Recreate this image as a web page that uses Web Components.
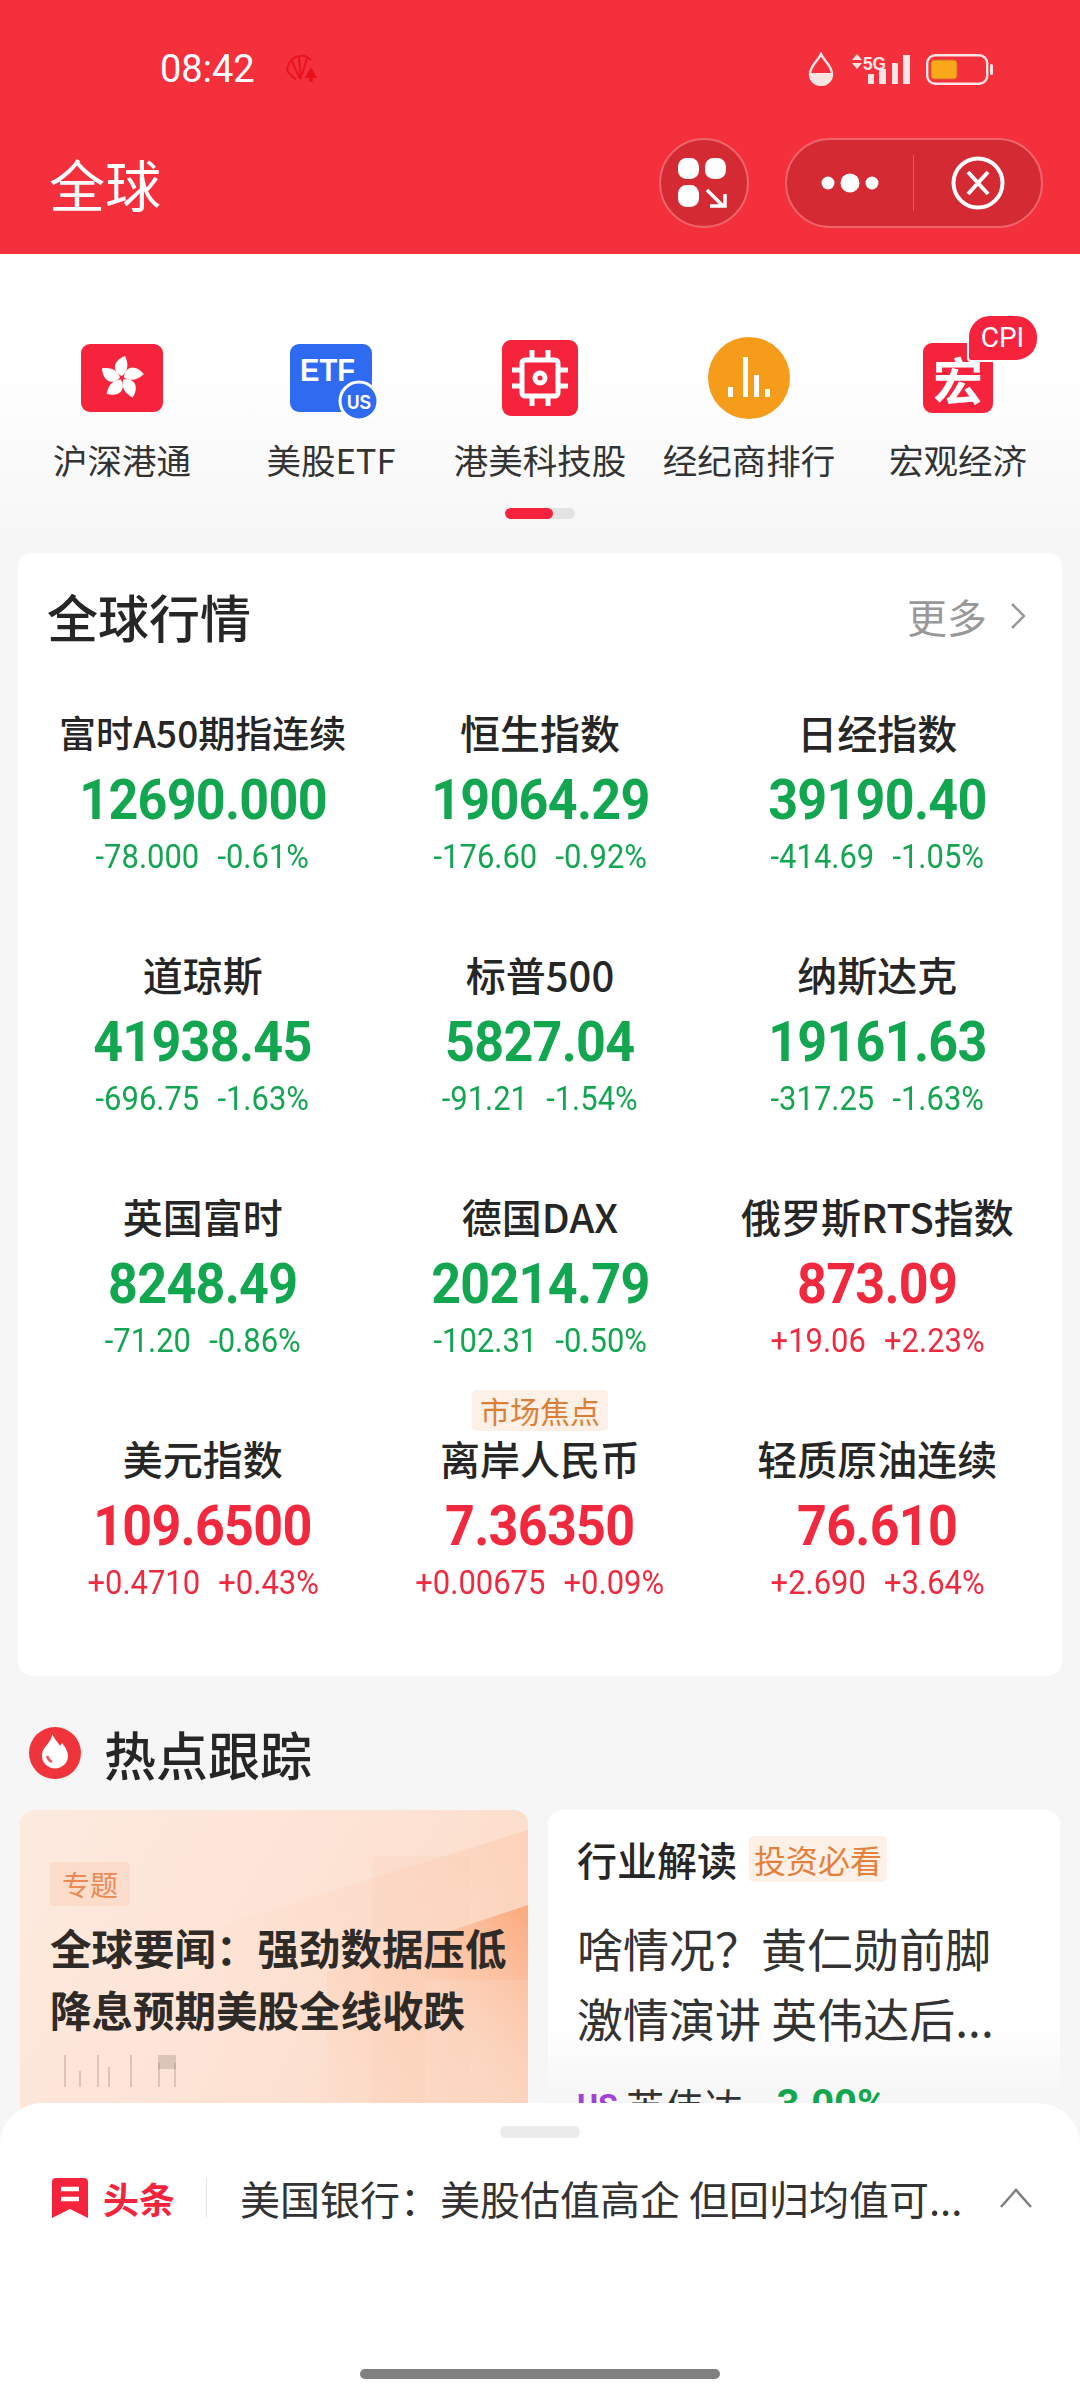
<!DOCTYPE html>
<html lang="zh">
<head>
<meta charset="utf-8">
<title>全球</title>
<style>
  html, body { margin: 0; height: 2400px; overflow: hidden; }
  body { width: 1080px; background: #f6f6f6; position: relative; font-family: "Noto Sans CJK SC", "Liberation Sans", sans-serif; color: #262626; }
</style>
</head>
<body>
  <app-header heading="全球"></app-header>
  <quick-tabs>
    <quick-tab label="沪深港通" icon="hk"></quick-tab>
    <quick-tab label="美股ETF" icon="etf"></quick-tab>
    <quick-tab label="港美科技股" icon="chip"></quick-tab>
    <quick-tab label="经纪商排行" icon="bars"></quick-tab>
    <quick-tab label="宏观经济" icon="macro"></quick-tab>
  </quick-tabs>
  <market-card>
    <market-cell name="富时A50期指连续" small value="12690.000" change="-78.000" percent="-0.61%"></market-cell>
    <market-cell name="恒生指数" value="19064.29" change="-176.60" percent="-0.92%"></market-cell>
    <market-cell name="日经指数" value="39190.40" change="-414.69" percent="-1.05%"></market-cell>
    <market-cell name="道琼斯" value="41938.45" change="-696.75" percent="-1.63%"></market-cell>
    <market-cell name="标普500" value="5827.04" change="-91.21" percent="-1.54%"></market-cell>
    <market-cell name="纳斯达克" value="19161.63" change="-317.25" percent="-1.63%"></market-cell>
    <market-cell name="英国富时" value="8248.49" change="-71.20" percent="-0.86%"></market-cell>
    <market-cell name="德国DAX" value="20214.79" change="-102.31" percent="-0.50%"></market-cell>
    <market-cell name="俄罗斯RTS指数" value="873.09" change="+19.06" percent="+2.23%"></market-cell>
    <market-cell name="美元指数" value="109.6500" change="+0.4710" percent="+0.43%"></market-cell>
    <market-cell name="离岸人民币" value="7.36350" change="+0.00675" percent="+0.09%" tag="市场焦点"></market-cell>
    <market-cell name="轻质原油连续" value="76.610" change="+2.690" percent="+3.64%"></market-cell>
  </market-card>
  <hot-section>
    <topic-card slot="left" tag="专题">全球要闻：强劲数据压低降息预期美股全线收跌</topic-card>
    <read-card slot="right">啥情况？黄仁勋前脚激情演讲 英伟达后...</read-card>
  </hot-section>
  <bottom-sheet>美国银行：美股估值高企 但回归均值可...</bottom-sheet>

<script>
const CJK = `"Noto Sans CJK SC", "Liberation Sans", sans-serif`;
const NUM = `Roboto, "Liberation Sans", sans-serif`;

class AppHeader extends HTMLElement {
  constructor() {
    super();
    const root = this.attachShadow({ mode: 'open' });
    root.innerHTML = `
      <style>
        :host { display: block; height: 254px; background: #f3303c; color: #fff; font-family: ${CJK}; }
        .status { height: 138px; display: flex; align-items: center; padding: 0 87px 0 160px; box-sizing: border-box; }
        .time { font: 400 38px/1 ${NUM}; width: 125px; }
        .right { margin-left: auto; display: flex; align-items: center; gap: 16px; }
        svg { display: block; }
        .nav { display: flex; align-items: center; height: 90px; padding: 0 37px 0 49px; }
        h1 { margin: 0; font-size: 56px; font-weight: 400; line-height: 90px; flex: 1; }
        .round, .capsule { background: #d32a33; border: 2px solid #f0636a; box-sizing: border-box; height: 90px; display: flex; align-items: center; }
        .round { width: 90px; border-radius: 50%; justify-content: center; margin-right: 36px; }
        .capsule { width: 258px; border-radius: 45px; }
        .capsule > div { display: flex; align-items: center; justify-content: center; }
        .more { width: 126px; height: 56px; border-right: 1px solid #e85a60; }
        .close { flex: 1; }
      </style>
      <div class="status">
        <span class="time">08:42</span>
        <svg width="34" height="28" viewBox="0 0 34 28"><g fill="none" stroke="#e8141f" stroke-width="2"><path d="M2 15C3 7 8 2 14 1c5-1 9 1 12 4"/><path d="M2 15c2 4 5 7 9 9M15 24L7 6M16 24L14 2M17 20L22 3"/></g><path d="M26 12l6 11H20z" fill="#e8101c"/><path d="M26 22v5" stroke="#e8101c" stroke-width="3"/></svg>
        <div class="right">
          <svg width="26" height="34" viewBox="0 0 26 34"><path d="M13 2C10 9 2 14 2 22a11 11 0 0 0 22 0C24 14 16 9 13 2z" fill="none" stroke="#fde4e4" stroke-width="2.400"/><path d="M2 21h22a11 11.500 0 0 1-22 0z" fill="#fde4e4"/></svg>
          <svg width="60" height="32" viewBox="0 0 60 32" fill="#fde4e4"><path d="M2 7l5-6 5 6zM2 10h10l-5 6z"/><text x="13" y="17" font-family="Liberation Sans" font-size="19" font-weight="700" textLength="23" lengthAdjust="spacingAndGlyphs">5G</text><path d="M18 21h6v10h-6zM29 16h7v15h-7zM42 10h6v21h-6zM53 2h7v29h-7z"/></svg>
          <svg width="67" height="31" viewBox="0 0 67 31"><rect x="1.200" y="1.200" width="60" height="28.600" rx="8" fill="none" stroke="#fde4e4" stroke-width="2.400"/><rect x="5" y="6" width="26" height="19" rx="3" fill="#f9a81a" stroke="#d9662a" stroke-width="1"/><rect x="64" y="10" width="3" height="11" rx="1.500" fill="#fde4e4"/></svg>
        </div>
      </div>
      <div class="nav">
        <h1></h1>
        <div class="round">
          <svg width="52" height="52" viewBox="0 0 52 52" fill="#fff"><rect x="0" y="1" width="21" height="21" rx="8.500"/><rect x="27" y="1" width="21" height="21" rx="8.500"/><rect x="0" y="28" width="21" height="22" rx="8.500"/><path d="M29 33l15 15M32 49h15V37" fill="none" stroke="#fff" stroke-width="3.500"/></svg>
        </div>
        <div class="capsule">
          <div class="more">
            <svg width="58" height="30" viewBox="0 0 58 30" fill="#fff"><circle cx="7" cy="15" r="6.500"/><circle cx="29" cy="15" r="9.500"/><circle cx="51" cy="15" r="6.500"/></svg>
          </div>
          <div class="close">
            <svg width="54" height="54" viewBox="0 0 54 54" fill="none" stroke="#fff"><circle cx="27" cy="27" r="24.500" stroke-width="4"/><path d="M17 16l20 22M37 16L17 38" stroke-width="4"/></svg>
          </div>
        </div>
      </div>`;
    root.querySelector('h1').textContent = this.getAttribute('heading');
  }
}

const TAB_ICONS = {
  hk: `<svg width="82" height="68" viewBox="0 0 82 68"><rect width="82" height="68" rx="9" fill="#f5233b"/><g fill="#fff" transform="translate(41 34)">${[0, 72, 144, 216, 288].map((a) => `<path transform="rotate(${a})" d="M0-2C-10-6-10-17 3-22C7-14 6-7 0-2z"/>`).join('')}</g></svg>`,
  etf: `<svg width="82" height="68" viewBox="0 0 82 68" style="overflow:visible"><rect width="82" height="68" rx="9" fill="#2f6bf0"/><text x="10" y="37" font-family="Liberation Sans" font-size="32" font-weight="700" fill="#fff" textLength="55" lengthAdjust="spacingAndGlyphs">ETF</text><circle cx="69" cy="57" r="19" fill="#2f6bf0" stroke="#fff" stroke-width="3"/><text x="69" y="65" text-anchor="middle" font-family="Liberation Sans" font-size="21" font-weight="700" fill="#fff" textLength="24" lengthAdjust="spacingAndGlyphs">US</text></svg>`,
  chip: `<svg width="76" height="76" viewBox="0 0 76 76"><rect width="76" height="76" rx="9" fill="#f5233b"/><g fill="none" stroke="#fff" stroke-width="5"><rect x="20" y="20" width="36" height="36" rx="3"/><circle cx="38" cy="38" r="5"/><path d="M30 10v10M46 10v10M30 56v10M46 56v10M10 30h10M10 46h10M56 30h10M56 46h10"/></g></svg>`,
  bars: `<svg width="82" height="82" viewBox="0 0 82 82"><circle cx="41" cy="41" r="41" fill="#f59c1a"/><path d="M20 50h5v10h-5zM35 20h5v40h-5zM46 38h5v22h-5zM57 52h5v8h-5z" fill="#fff"/></svg>`,
  macro: `<div class="macro">宏</div>`
};

class QuickTab extends HTMLElement {
  constructor() {
    super();
    const root = this.attachShadow({ mode: 'open' });
    root.innerHTML = `
      <style>
        :host { display: flex; flex-direction: column; align-items: center; width: 209px; position: relative; }
        .icon { height: 84px; display: flex; align-items: center; justify-content: center; position: relative; }
        .macro { width: 70px; height: 70px; border-radius: 9px; background: #f5233b; color: #fff; font-size: 50px; font-weight: 700; line-height: 70px; text-align: center; }
        .label { margin-top: 17px; font-size: 34.500px; line-height: 44px; white-space: nowrap; color: #333; }
        .badge { position: absolute; left: 113px; top: -22px; width: 72px; height: 48px; box-sizing: border-box; background: #f5233b; border: 2px solid #fff; border-radius: 23px 23px 23px 4px; color: #fff; font: 400 28px/44px ${NUM}; text-align: center; }
      </style>
      <div class="icon"></div>
      <div class="label"></div>`;
    const icon = this.getAttribute('icon');
    root.querySelector('.icon').innerHTML = TAB_ICONS[icon];
    root.querySelector('.label').textContent = this.getAttribute('label');
    if (icon === 'macro') {
      const badge = document.createElement('div');
      badge.className = 'badge';
      badge.textContent = 'CPI';
      root.appendChild(badge);
    }
  }
}

class QuickTabs extends HTMLElement {
  constructor() {
    super();
    const root = this.attachShadow({ mode: 'open' });
    root.innerHTML = `
      <style>
        :host { display: block; height: 299px; box-sizing: border-box; padding-top: 82px; background: linear-gradient(#fff 0, #fff 35%, #f6f6f6 100%); font-family: ${CJK}; }
        .row { display: flex; justify-content: center; }
        .dots { display: flex; width: 70px; height: 11px; margin: 27px auto 0; border-radius: 6px; background: #e3e3e3; overflow: hidden; }
        .dots i { width: 48px; background: #f5233b; border-radius: 6px; }
      </style>
      <div class="row"><slot></slot></div>
      <div class="dots"><i></i></div>`;
  }
}

class MarketCard extends HTMLElement {
  constructor() {
    super();
    const root = this.attachShadow({ mode: 'open' });
    root.innerHTML = `
      <style>
        :host { display: block; margin: 0 18px; height: 1123px; background: #fff; border-radius: 14px; font-family: ${CJK}; }
        .head { height: 154px; box-sizing: border-box; padding: 27px 36px 0 29px; display: flex; justify-content: space-between; }
        h2 { margin: 0; font-size: 51px; line-height: 72px; font-weight: 500; color: #262626; }
        .more { display: flex; align-items: center; gap: 23px; height: 72px; font-size: 40px; color: #999; }
        .grid { display: grid; grid-template-columns: repeat(3, 1fr); grid-auto-rows: 242px; padding: 0 16px; }
      </style>
      <div class="head">
        <h2>全球行情</h2>
        <div class="more"><span>更多</span><svg width="16" height="28" viewBox="0 0 16 28" fill="none" stroke="#999" stroke-width="2.500"><path d="M2 2l12 12L2 26"/></svg></div>
      </div>
      <div class="grid"><slot></slot></div>`;
  }
}

class MarketCell extends HTMLElement {
  constructor() {
    super();
    const root = this.attachShadow({ mode: 'open' });
    root.innerHTML = `
      <style>
        :host { display: flex; flex-direction: column; align-items: center; position: relative; --tone: #12a650; }
        :host([up]) { --tone: #f0293e; }
        .name { font-size: 40px; font-weight: 500; line-height: 50px; color: #262626; white-space: nowrap; }
        :host([small]) .name { font-size: 37px; }
        .value { margin-top: 13px; font: 700 56px/60px ${NUM}; color: var(--tone); letter-spacing: -0.8px; white-space: nowrap; transform: scaleX(.93); }
        .sub { margin-top: 9px; display: flex; gap: 20px; font: 400 34px/34px ${NUM}; color: var(--tone); white-space: nowrap; transform: scaleX(.91); }
        .tag { position: absolute; top: -43px; height: 41px; padding: 0 8px; border-radius: 5px; background: #fdf0e7; color: #dc7f36; font-size: 30px; line-height: 41px; white-space: nowrap; }
      </style>
      <div class="name"></div>
      <div class="value"></div>
      <div class="sub"><span class="change"></span><span class="percent"></span></div>`;
    root.querySelector('.name').textContent = this.getAttribute('name');
    root.querySelector('.value').textContent = this.getAttribute('value');
    root.querySelector('.change').textContent = this.getAttribute('change');
    root.querySelector('.percent').textContent = this.getAttribute('percent');
    if (this.getAttribute('change').startsWith('+')) this.setAttribute('up', '');
    if (this.hasAttribute('tag')) {
      const tag = document.createElement('div');
      tag.className = 'tag';
      tag.textContent = this.getAttribute('tag');
      root.appendChild(tag);
    }
  }
}

class HotSection extends HTMLElement {
  constructor() {
    super();
    const root = this.attachShadow({ mode: 'open' });
    root.innerHTML = `
      <style>
        :host { display: block; padding-top: 50px; font-family: ${CJK}; }
        .title { display: flex; align-items: center; gap: 23px; height: 54px; padding-left: 29px; font-size: 52px; font-weight: 500; color: #262626; }
        .cards { display: grid; grid-template-columns: 508px 512px; gap: 20px; margin: 30px 20px 0; height: 300px; }
      </style>
      <div class="title">
        <svg width="52" height="52" viewBox="0 0 52 52"><circle cx="26" cy="26" r="26" fill="#f0343c"/><path d="M23 7C26 13 29 15 31 19C32 17 33 17 33 16C37 21 39 25 39 29A13 12.500 0 0 1 13 29C13 22 17 20 20 15C22 12 23 10 23 7z" fill="#fff"/><path d="M18 29c1 3 3 5 5 6" stroke="#f0545a" stroke-width="2.500" fill="none"/></svg>
        <span>热点跟踪</span>
      </div>
      <div class="cards"><slot name="left"></slot><slot name="right"></slot></div>`;
  }
}

class TopicCard extends HTMLElement {
  constructor() {
    super();
    const root = this.attachShadow({ mode: 'open' });
    root.innerHTML = `
      <style>
        :host { display: block; position: relative; height: 300px; box-sizing: border-box; padding: 52px 20px 0 30px; border-radius: 14px 14px 0 0; overflow: hidden; background: linear-gradient(120deg, #fdeadf 0%, #fde2d3 60%, #fbd8c4 100%); }
        .deco { position: absolute; inset: 0; }
        .tag { position: relative; display: inline-block; padding: 0 12px; height: 44px; border-radius: 4px; background: #fcdccb; color: #ea8a55; font-size: 28px; line-height: 44px; }
        .text { position: relative; margin-top: 10px; font-size: 41.500px; font-weight: 700; line-height: 62px; color: #2e2a28; }
        .blur { position: relative; display: block; margin-top: 13px; }
      </style>
      <svg class="deco" width="508" height="300" viewBox="0 0 508 300">
        <defs>
          <linearGradient id="warm" x1="1" y1="0" x2="0" y2="1"><stop offset="0" stop-color="#fb9e6c"/><stop offset=".45" stop-color="#fcc4a4" stop-opacity=".5"/><stop offset="1" stop-color="#fcd4bc" stop-opacity=".15"/></linearGradient>
          <linearGradient id="soft" x1="1" y1="0" x2="0" y2="1"><stop offset="0" stop-color="#fcc3a3"/><stop offset="1" stop-color="#fde0d0" stop-opacity="0"/></linearGradient>
          <filter id="soften"><feGaussianBlur stdDeviation=".7"/></filter>
        </defs>
        <path d="M203 115L508 20V300H203z" fill="url(#soft)" opacity=".45"/>
        <path d="M352 46H450V300H352z" fill="#fbd0b6" opacity=".25"/>
        <path d="M307 162L508 95V300H307z" fill="url(#warm)" opacity=".8"/>
        <path d="M405 170H508V300H405z" fill="#fff" opacity=".1"/>
      </svg>
      <span class="tag"></span>
      <div class="text"><slot></slot></div>
      <svg class="blur" width="130" height="36" viewBox="0 0 130 36"><g filter="url(#soften2)"><g fill="#8a7a70" opacity=".3"><rect x="14" y="2" width="2" height="32"/><rect x="29" y="18" width="2" height="16"/><rect x="47" y="2" width="2" height="32"/><rect x="58" y="14" width="2" height="20"/><rect x="80" y="2" width="2" height="32"/><rect x="108" y="10" width="2" height="24"/><rect x="124" y="10" width="2" height="24"/></g><path d="M108 2h18v14h-18z" fill="#8a7a70" opacity=".3"/></g><defs><filter id="soften2"><feGaussianBlur stdDeviation=".6"/></filter></defs></svg>`;
    root.querySelector('.tag').textContent = this.getAttribute('tag');
  }
}

class ReadCard extends HTMLElement {
  constructor() {
    super();
    const root = this.attachShadow({ mode: 'open' });
    root.innerHTML = `
      <style>
        :host { display: block; height: 300px; box-sizing: border-box; padding: 24px 30px 0 29px; border-radius: 14px 14px 0 0; overflow: hidden; background: linear-gradient(#fff 70%, #f5f5f5); }
        .top { display: flex; align-items: center; gap: 12px; height: 50px; font-size: 40px; color: #262626; font-weight: 500; white-space: nowrap; }
        .tag { padding: 0 5px; height: 46px; line-height: 46px; font-size: 32px; font-weight: 400; background: #fdf0e7; color: #e4803a; border-radius: 5px; }
        .text { margin-top: 28px; font-size: 46px; line-height: 70px; color: #333; height: 140px; overflow: hidden; }
        .stock { display: flex; align-items: center; gap: 8px; margin-top: 28px; font-size: 39px; line-height: 50px; color: #333; }
        .us { font: 700 32px/50px ${NUM}; color: #a23fd8; }
        .pct { margin-left: 10px; font: 700 40px/50px ${NUM}; color: #12a650; }
      </style>
      <div class="top"><span>行业解读</span><span class="tag">投资必看</span></div>
      <div class="text"><slot></slot></div>
      <div class="stock"><span class="us">US</span><span>英伟达</span><span class="pct">-3.00%</span></div>`;
  }
}

class BottomSheet extends HTMLElement {
  constructor() {
    super();
    const root = this.attachShadow({ mode: 'open' });
    root.innerHTML = `
      <style>
        :host { display: block; position: absolute; left: 0; right: 0; bottom: 0; height: 297px; box-sizing: border-box; padding-top: 23px; background: #fff; border-radius: 42px 42px 0 0; font-family: ${CJK}; }
        .handle { width: 80px; height: 12px; margin: 0 auto; border-radius: 6px; background: #ebebeb; }
        .row { display: flex; align-items: center; height: 80px; margin-top: 20px; padding: 0 47px 0 52px; }
        .brand { margin-left: 15px; font-size: 36px; font-weight: 700; color: #f5233b; white-space: nowrap; }
        .sep { width: 1px; height: 40px; background: #e5e5e5; margin: 0 33px 0 31px; }
        .text { flex: 1; min-width: 0; white-space: nowrap; font-size: 40px; color: #333; }
        .chev { margin-left: 35px; flex: none; }
        .bar { position: absolute; left: 360px; bottom: 21px; width: 360px; height: 10px; border-radius: 5px; background: #808080; }
      </style>
      <div class="handle"></div>
      <div class="row">
        <svg width="36" height="40" viewBox="0 0 36 40"><path d="M4 0h28a4 4 0 0 1 4 4v36L18 31 0 40V4a4 4 0 0 1 4-4z" fill="#f5233b"/><path d="M9 11h18M9 21h18" stroke="#fff" stroke-width="4.500"/></svg>
        <span class="brand">头条</span>
        <span class="sep"></span>
        <span class="text"><slot></slot></span>
        <svg class="chev" width="34" height="20" viewBox="0 0 34 20" fill="none" stroke="#808080" stroke-width="2.500"><path d="M2 19L17 2l15 17"/></svg>
      </div>
      <div class="bar"></div>`;
  }
}

customElements.define('app-header', AppHeader);
customElements.define('quick-tab', QuickTab);
customElements.define('quick-tabs', QuickTabs);
customElements.define('market-card', MarketCard);
customElements.define('market-cell', MarketCell);
customElements.define('hot-section', HotSection);
customElements.define('topic-card', TopicCard);
customElements.define('read-card', ReadCard);
customElements.define('bottom-sheet', BottomSheet);
</script>
</body>
</html>
